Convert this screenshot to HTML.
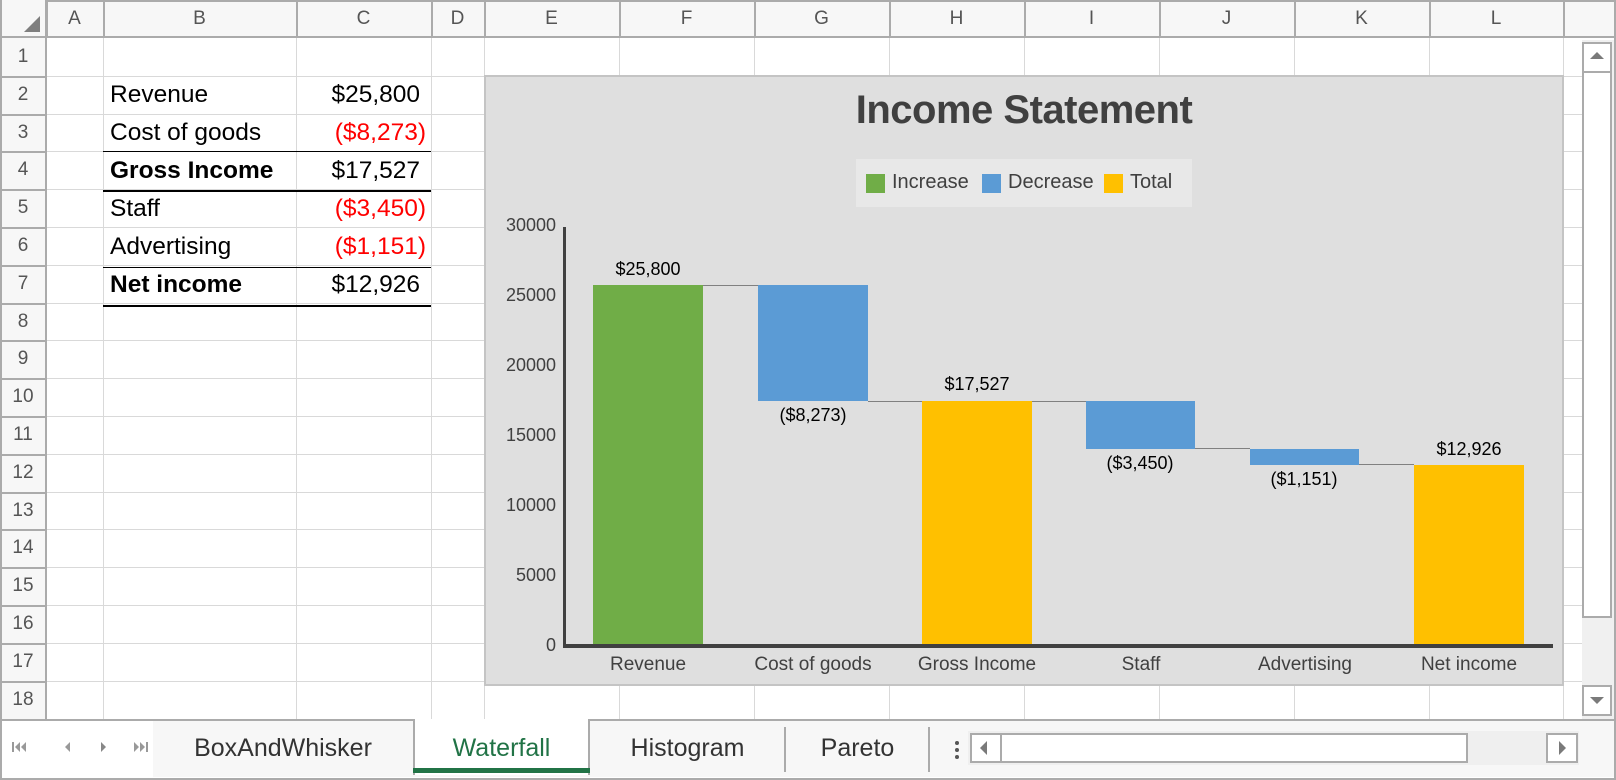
<!DOCTYPE html>
<html><head><meta charset="utf-8"><style>
*{margin:0;padding:0;box-sizing:border-box}
body{width:1616px;height:780px;position:relative;overflow:hidden;background:#fff;font-family:"Liberation Sans",sans-serif}
.a{position:absolute}
.vl{position:absolute;width:1px;background:#d9d9d9}
.hl{position:absolute;height:1px;background:#d9d9d9}
.hdr{position:absolute;background:#f7f7f7;color:#555;font-size:19px;text-align:center}
.cell{position:absolute;font-size:24.5px;color:#000;white-space:nowrap}
.r{color:#f00}
.yl{position:absolute;right:0;font-size:18px;color:#404040;width:72px;text-align:right}
.dl{position:absolute;font-size:18px;color:#000;width:140px;text-align:center}
.cl{position:absolute;font-size:19px;color:#404040;width:164px;text-align:center}
.tab{position:absolute;top:719px;height:53px;font-size:25px;color:#333;line-height:53px;text-align:center}
</style></head><body>
<div class="a" style="left:0;top:0;width:1616px;height:780px;border:2px solid #ababab"></div>
<div class="hdr" style="left:2px;top:2px;width:1612px;height:36px;border-bottom:2px solid #ababab"></div>
<div class="a" style="left:0;top:0;width:47px;height:719px;background:#f7f7f7;border-right:2px solid #ababab;border-left:2px solid #ababab"></div>
<svg class="a" style="left:22px;top:16px" width="20" height="18"><polygon points="18,0 18,16 2,16" fill="#7f7f7f"/></svg>
<div id="cols"></div>
<script>
var cx=[46,103,296,431,484,619,754,889,1024,1159,1294,1429,1563];
var names=["A","B","C","D","E","F","G","H","I","J","K","L",""];
var h="";
for(var i=0;i<cx.length;i++){
 var l=cx[i],r=(i+1<cx.length?cx[i+1]:1616);
 h+='<div class="a" style="left:'+l+'px;top:2px;width:2px;height:36px;background:#ababab"></div>';
 h+='<div class="a" style="left:'+l+'px;top:8px;width:'+(r-l)+'px;text-align:center;font-size:19px;color:#555">'+names[i]+'</div>';
 if(i>0) h+='<div class="vl" style="left:'+l+'px;top:38px;height:681px"></div>';
}
h+='<div class="a" style="left:0;top:36px;width:47px;height:2px;background:#ababab"></div>';
var ry=[38,76,114,151,189,227,265,303,340,378,416,454,492,529,567,605,643,681,719];
for(var j=0;j<18;j++){
 h+='<div class="a" style="left:0;top:'+(ry[j]+8)+'px;width:46px;text-align:center;font-size:19px;color:#555">'+(j+1)+'</div>';
 h+='<div class="a" style="left:2px;top:'+ry[j+1]+'px;width:45px;height:2px;background:#ababab"></div>';
 h+='<div class="hl" style="left:47px;top:'+ry[j+1]+'px;width:1535px"></div>';
}
document.getElementById('cols').innerHTML=h;
</script>
<div class="cell" style="left:110px;top:81px">Revenue</div>
<div class="cell" style="left:110px;top:119px">Cost of goods</div>
<div class="cell" style="left:110px;top:157px;font-weight:bold">Gross Income</div>
<div class="cell" style="left:110px;top:195px">Staff</div>
<div class="cell" style="left:110px;top:233px">Advertising</div>
<div class="cell" style="left:110px;top:271px;font-weight:bold">Net income</div>
<div class="cell" style="right:1196px;top:81px">$25,800</div>
<div class="cell r" style="right:1190px;top:119px">($8,273)</div>
<div class="cell" style="right:1196px;top:157px">$17,527</div>
<div class="cell r" style="right:1190px;top:195px">($3,450)</div>
<div class="cell r" style="right:1190px;top:233px">($1,151)</div>
<div class="cell" style="right:1196px;top:271px">$12,926</div>
<div class="a" style="left:103px;top:151px;width:328px;height:1px;background:#000"></div>
<div class="a" style="left:103px;top:190px;width:328px;height:2px;background:#000"></div>
<div class="a" style="left:103px;top:267px;width:328px;height:1px;background:#000"></div>
<div class="a" style="left:103px;top:305px;width:328px;height:2px;background:#000"></div>
<div class="a" style="left:484px;top:75px;width:1080px;height:611px;background:#dfdfdf;border:2px solid #c4c4c4"></div>
<div class="a" style="left:484px;top:88px;width:1080px;text-align:center;font-size:40px;font-weight:bold;color:#404040;letter-spacing:-0.5px">Income Statement</div>
<div class="a" style="left:856px;top:159px;width:336px;height:48px;background:#e8e8e8"></div>
<div class="a" style="left:866px;top:174px;width:19px;height:19px;background:#70ad47"></div>
<div class="a" style="left:892px;top:171px;font-size:20px;color:#404040">Increase</div>
<div class="a" style="left:982px;top:174px;width:19px;height:19px;background:#5b9bd5"></div>
<div class="a" style="left:1008px;top:171px;font-size:20px;color:#404040">Decrease</div>
<div class="a" style="left:1104px;top:174px;width:19px;height:19px;background:#ffc000"></div>
<div class="a" style="left:1130px;top:171px;font-size:20px;color:#404040">Total</div>
<div class="a" style="left:484px;top:0;width:72px;height:700px">
<div class="yl" style="top:215px">30000</div>
<div class="yl" style="top:285px">25000</div>
<div class="yl" style="top:355px">20000</div>
<div class="yl" style="top:425px">15000</div>
<div class="yl" style="top:495px">10000</div>
<div class="yl" style="top:565px">5000</div>
<div class="yl" style="top:635px">0</div>
</div>
<div class="a" style="left:563px;top:227px;width:3px;height:421px;background:#404040"></div>
<div class="a" style="left:563px;top:644px;width:990px;height:4px;background:#404040"></div>
<div class="a" style="left:593px;top:285px;width:110px;height:359px;background:#70ad47"></div>
<div class="a" style="left:758px;top:285px;width:110px;height:116px;background:#5b9bd5"></div>
<div class="a" style="left:922px;top:401px;width:110px;height:243px;background:#ffc000"></div>
<div class="a" style="left:1086px;top:401px;width:109px;height:48px;background:#5b9bd5"></div>
<div class="a" style="left:1250px;top:449px;width:109px;height:16px;background:#5b9bd5"></div>
<div class="a" style="left:1414px;top:465px;width:110px;height:179px;background:#ffc000"></div>
<div class="a" style="left:703px;top:285px;width:55px;height:1px;background:#808080"></div>
<div class="a" style="left:868px;top:401px;width:54px;height:1px;background:#808080"></div>
<div class="a" style="left:1032px;top:401px;width:54px;height:1px;background:#808080"></div>
<div class="a" style="left:1195px;top:448px;width:55px;height:1px;background:#808080"></div>
<div class="a" style="left:1359px;top:464px;width:55px;height:1px;background:#808080"></div>
<div class="dl" style="left:578px;top:259px">$25,800</div>
<div class="dl" style="left:743px;top:405px">($8,273)</div>
<div class="dl" style="left:907px;top:374px">$17,527</div>
<div class="dl" style="left:1070px;top:453px">($3,450)</div>
<div class="dl" style="left:1234px;top:469px">($1,151)</div>
<div class="dl" style="left:1399px;top:439px">$12,926</div>
<div class="cl" style="left:566px;top:654px">Revenue</div>
<div class="cl" style="left:731px;top:654px">Cost of goods</div>
<div class="cl" style="left:895px;top:654px">Gross Income</div>
<div class="cl" style="left:1059px;top:654px">Staff</div>
<div class="cl" style="left:1223px;top:654px">Advertising</div>
<div class="cl" style="left:1387px;top:654px">Net income</div>
<div class="a" style="left:1582px;top:40px;width:32px;height:679px;background:#f0f0f0"></div>
<div class="a" style="left:1582px;top:42px;width:30px;height:576px;background:#fff;border:2px solid #ababab"></div>
<div class="a" style="left:1582px;top:42px;width:30px;height:31px;border:2px solid #ababab;background:#fff"></div>
<svg class="a" style="left:1589px;top:51px" width="16" height="10"><polygon points="8,1 15,8 1,8" fill="#7a7a7a"/></svg>
<div class="a" style="left:1582px;top:685px;width:30px;height:31px;border:2px solid #ababab;background:#fff"></div>
<svg class="a" style="left:1589px;top:696px" width="16" height="10"><polygon points="1,1 15,1 8,8" fill="#7a7a7a"/></svg>
<div class="a" style="left:2px;top:719px;width:1612px;height:2px;background:#ababab"></div>
<div class="a" style="left:153px;top:721px;width:1461px;height:56px;background:#f7f7f7"></div>
<svg class="a" style="left:8px;top:738px" width="140" height="18" fill="#999">
<rect x="4" y="4" width="2" height="10"/><polygon points="12,4 7,9 12,14"/><polygon points="18,4 13,9 18,14"/>
<polygon points="62,4 57,9 62,14"/>
<polygon points="93,4 98,9 93,14" fill="#888"/>
<polygon points="126,4 131,9 126,14"/><polygon points="132,4 137,9 132,14"/><rect x="138" y="4" width="2" height="10"/>
</svg>
<div class="tab" style="left:153px;width:260px;top:722px">BoxAndWhisker</div>
<div class="a" style="left:413px;top:719px;width:177px;height:56px;background:#fff;border-left:2px solid #ababab;border-right:2px solid #ababab"></div>
<div class="a" style="left:413px;top:768px;width:177px;height:5px;background:#217346"></div>
<div class="tab" style="left:413px;width:177px;top:722px;color:#217346">Waterfall</div>
<div class="tab" style="left:590px;width:195px;top:722px">Histogram</div>
<div class="a" style="left:784px;top:727px;width:2px;height:45px;background:#ababab"></div>
<div class="tab" style="left:786px;width:143px;top:722px">Pareto</div>
<div class="a" style="left:928px;top:727px;width:2px;height:45px;background:#ababab"></div>
<div class="a" style="left:955px;top:741px;width:4px;height:4px;border-radius:2px;background:#555"></div>
<div class="a" style="left:955px;top:748px;width:4px;height:4px;border-radius:2px;background:#555"></div>
<div class="a" style="left:955px;top:755px;width:4px;height:4px;border-radius:2px;background:#555"></div>
<div class="a" style="left:968px;top:731px;width:611px;height:34px;background:#efefef"></div>
<div class="a" style="left:970px;top:733px;width:498px;height:30px;background:#fff;border:2px solid #ababab"></div>
<div class="a" style="left:970px;top:733px;width:32px;height:30px;border:2px solid #ababab;background:#fff"></div>
<svg class="a" style="left:978px;top:740px" width="12" height="16"><polygon points="9,1 2,8 9,15" fill="#7a7a7a"/></svg>
<div class="a" style="left:1546px;top:733px;width:32px;height:30px;border:2px solid #ababab;background:#fff"></div>
<svg class="a" style="left:1557px;top:740px" width="12" height="16"><polygon points="2,1 9,8 2,15" fill="#7a7a7a"/></svg>
</body></html>
